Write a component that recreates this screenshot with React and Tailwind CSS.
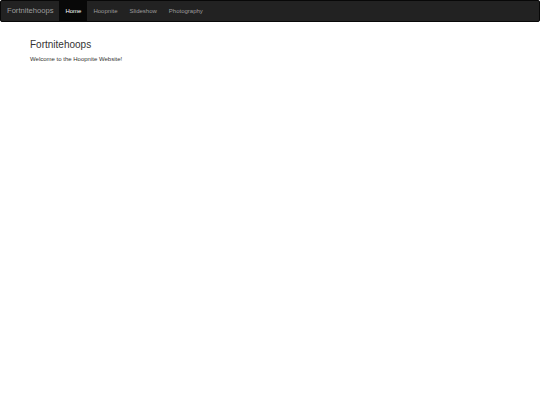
import React from 'react';

const links = ['Home', 'Hoopnite', 'Slideshow', 'Photography'];

export default function App() {
  return (
    <div className="min-h-[405px] bg-white" style={{ fontFamily: '"Liberation Sans", Arial, sans-serif' }}>
      <nav className="h-[22px] flex items-stretch bg-[#222222] border border-[#080808] rounded-[2px]">
        <a className="flex items-center pl-[6px] pr-[6px] text-[7.6px] text-[#9d9d9d]">Fortnitehoops</a>
        <ul className="flex items-stretch">
          {links.map((l, i) => (
            <li key={l} className={`flex items-center px-[6px] text-[6px] ${i === 0 ? 'bg-[#080808] text-white' : 'text-[#9d9d9d]'}`}>
              {l}
            </li>
          ))}
        </ul>
      </nav>
      <div className="pl-[30px] pt-[16px]">
        <h1 className="text-[10px] leading-[13px] text-[#333333]">Fortnitehoops</h1>
        <p className="mt-[4px] text-[6px] text-[#333333]">Welcome to the Hoopnite Website!</p>
      </div>
    </div>
  );
}
